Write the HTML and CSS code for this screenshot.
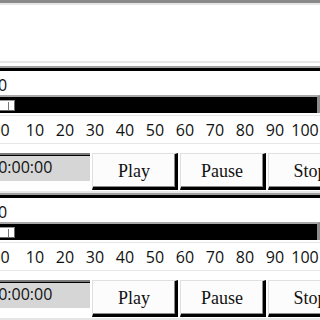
FILE: index.html
```html
<!DOCTYPE html>
<html>
<head>
<meta charset="utf-8">
<link rel="stylesheet" href="styles.css">
</head>
<body>
<div class="window">
  <div class="toparea"></div>
  <section class="panel">
    <div class="panel-inner">
      <div class="label">0</div>
      <div class="track"><div class="thumb"></div></div>
      <div class="sep"></div>
      <div class="ticks"><span>0</span><span>10</span><span>20</span><span>30</span><span>40</span><span>50</span><span>60</span><span>70</span><span>80</span><span>90</span><span>100</span></div>
      <div class="sep sep-b"></div>
      <div class="controls">
        <div class="time">00:00:00</div>
        <button class="btn">Play</button>
        <button class="btn">Pause</button>
        <button class="btn">Stop</button>
      </div>
      <div class="sep sep-c"></div>
    </div>
  </section>
  <section class="panel">
    <div class="panel-inner">
      <div class="label">0</div>
      <div class="track"><div class="thumb"></div></div>
      <div class="sep"></div>
      <div class="ticks"><span>0</span><span>10</span><span>20</span><span>30</span><span>40</span><span>50</span><span>60</span><span>70</span><span>80</span><span>90</span><span>100</span></div>
      <div class="sep sep-b"></div>
      <div class="controls">
        <div class="time">00:00:00</div>
        <button class="btn">Play</button>
        <button class="btn">Pause</button>
        <button class="btn">Stop</button>
      </div>
      <div class="sep sep-c"></div>
    </div>
  </section>
</div>
</body>
</html>
```
FILE: styles.css
```css
html, body {
  margin: 0;
  padding: 0;
  background: #ffffff;
}
body {
  width: 320px;
  height: 320px;
  overflow: hidden;
  font-family: "Open Sans", "Noto Sans", sans-serif;
  color: #111;
}
.window {
  width: 320px;
  border-top: 3px solid #8a8a8a;
}
.toparea {
  box-sizing: border-box;
  height: 60px;
  border-top: 2px solid #e6e6e6;
  border-bottom: 2px solid #e6e6e6;
  margin-bottom: 3px;
}
.panel {
  border-top: 2px solid #a0a0a0;
}
.panel-inner {
  border-top: 3px solid #000;
}
.label {
  height: 24px;
  box-sizing: border-box;
  padding-top: 6px;
  margin-left: -2px;
  font-size: 16px;
  line-height: 16px;
}
.track {
  position: relative;
  height: 16px;
  background: #000;
  border-top: 2px solid #a8a8a8;
  border-right: 3px solid #8c8c8c;
}
.thumb {
  position: absolute;
  left: -5px;
  top: 3px;
  width: 18px;
  height: 9px;
  background: #fff;
  border: 1px solid #9a9a9a;
  border-right-color: #6a6a6a;
  border-bottom-color: #6a6a6a;
}
.thumb::after {
  content: "";
  position: absolute;
  left: 12px;
  top: 1px;
  width: 1px;
  height: 8px;
  background: #777;
}
.sep {
  height: 1px;
  background: #e6e6e6;
  margin-top: 2px;
}
.sep-b {
  margin-top: 0;
}
.sep-c {
  margin-top: 1px;
  height: 2px;
}
.ticks {
  display: grid;
  grid-template-columns: repeat(11, 30px);
  margin-left: -10px;
  height: 27px;
  box-sizing: border-box;
  padding-top: 6px;
  font-size: 16px;
  line-height: 16px;
}
.ticks span {
  text-align: center;
}
.controls {
  display: flex;
  align-items: flex-start;
  gap: 2px;
  padding-top: 9px;
  height: 37px;
}
.time {
  flex: none;
  margin-left: -22px;
  width: 112px;
  height: 28px;
  box-sizing: border-box;
  background: #d6d6d6;
  border-top: 2px solid #7a7a7a;
  box-shadow: inset 0 1px 0 #000;
  padding-left: 11px;
  font-size: 16px;
  line-height: 25px;
}
.btn {
  flex: none;
  width: 86px;
  height: 37px;
  box-sizing: border-box;
  margin: 0;
  padding: 2px 0 0 0;
  background: #fcfcfc;
  border-style: solid;
  border-color: #e0e0e0 #000 #000 #e0e0e0;
  border-width: 1px 3px 3px 1px;
  box-shadow: inset -1px -1px 0 #8a8a8a;
  font-family: "Liberation Serif", "Times New Roman", serif;
  font-size: 18px;
  color: #111;
  line-height: 31px;
  text-align: center;
}
```
